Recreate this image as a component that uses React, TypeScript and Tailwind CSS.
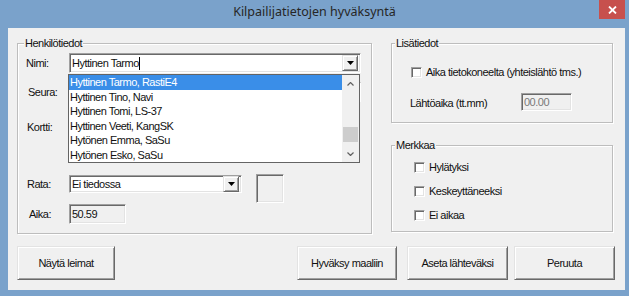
import React from "react";

const sunken =
  "border border-t-[#a0a0a0] border-l-[#a0a0a0] border-r-white border-b-white shadow-[inset_1px_1px_0_#696969,inset_-1px_-1px_0_#e3e3e3]";
const raised =
  "border border-t-[#e3e3e3] border-l-[#e3e3e3] border-r-[#696969] border-b-[#696969] shadow-[inset_1px_1px_0_#fff,inset_-1px_-1px_0_#a0a0a0] bg-[#f0f0f0]";
const etched =
  "border border-[#bdbdbd] shadow-[inset_1px_1px_0_#fff,1px_1px_0_#fff]";

function DropBtn() {
  return (
    <div className={`${raised} ml-auto mr-[2px] w-[16px] h-[16px] flex items-center justify-center`}>
      <svg width="7" height="4" viewBox="0 0 7 4">
        <polygon points="0,0 7,0 3.5,4" fill="#000" />
      </svg>
    </div>
  );
}

function Check({ label }: { label: string }) {
  return (
    <div className="flex items-center h-[11px]">
      <div className={`${sunken} w-[11px] h-[11px] bg-white`} />
      <span className="ml-[4px] leading-none">{label}</span>
    </div>
  );
}

function Legend({ text, left }: { text: string; left: string }) {
  return (
    <span className={`absolute -top-[7px] ${left} px-[1px] bg-[#f0f0f0] leading-[13px]`}>{text}</span>
  );
}

const items = [
  { t: "Hyttinen Tarmo, RastiE4", h: "h-[15px]", sel: true },
  { t: "Hyttinen Tino, Navi", h: "h-[14px]", sel: false },
  { t: "Hyttinen Tomi, LS-37", h: "h-[15px]", sel: false },
  { t: "Hyttinen Veeti, KangSK", h: "h-[14px]", sel: false },
  { t: "Hytönen Emma, SaSu", h: "h-[15px]", sel: false },
  { t: "Hytönen Esko, SaSu", h: "h-[14px]", sel: false },
];

export default function App() {
  return (
    <div className="w-[629px] h-[296px] bg-[#7aa2cb] flex flex-col font-['Liberation_Sans',Arial,sans-serif] text-[11px] tracking-[-0.5px] text-[#111] select-none">
      <div className="h-[28px] relative flex items-center justify-center">
        <span className="text-[12.5px] text-[#262626] tracking-normal font-['Noto_Sans',sans-serif] -mt-[3px]">
          Kilpailijatietojen hyväksyntä
        </span>
        <div className="absolute right-[4px] top-0 w-[26px] h-[19px] bg-[#c7504d] flex items-center justify-center">
          <svg width="9" height="8" viewBox="0 0 9 8">
            <path d="M1 0.5 L8 7.5 M8 0.5 L1 7.5" stroke="#fff" strokeWidth="1.8" />
          </svg>
        </div>
      </div>

      <div className="ml-[8px] mr-[4px] h-[262px] bg-[#f0f0f0] pl-[9px] pt-[15px] flex flex-col">
        <div className="flex items-start">
          {/* Henkilötiedot */}
          <div className={`${etched} relative w-[355px] h-[191px] flex flex-col pl-[8px]`}>
            <Legend text="Henkilötiedot" left="left-[6px]" />

            <div className="mt-[9px] h-[20px] flex items-center">
              <span className="w-[43px]">Nimi:</span>
              <div className={`${sunken} w-[292px] h-[20px] bg-white flex items-center`}>
                <span className="pl-[2px]">Hyttinen Tarmo</span>
                <span className="w-px h-[13px] bg-black" />
                <DropBtn />
              </div>
            </div>

            <div className="mt-[9px] h-[20px] flex items-center">
              <span className="w-[43px] pl-[2px]">Seura:</span>
              <div className={`${sunken} w-[292px] h-[20px] bg-white`} />
            </div>

            <div className="mt-[15px] h-[20px] flex items-center">
              <span className="w-[43px] pl-[1px]">Kortti:</span>
              <div className={`${sunken} w-[120px] h-[20px] bg-white`} />
            </div>

            <div className="mt-[38px] h-[18px] flex items-start">
              <span className="w-[43px] pl-[1px] leading-[18px]">Rata:</span>
              <div className={`${sunken} w-[173px] h-[18px] bg-white flex items-center`}>
                <span className="pl-[2px]">Ei tiedossa</span>
                <DropBtn />
              </div>
              <div className={`${sunken} ml-[14px] -mt-[1px] w-[28px] h-[29px] shrink-0`} />
            </div>

            <div className="mt-[11px] h-[20px] flex items-center">
              <span className="w-[43px] pl-[3px]">Aika:</span>
              <div className={`${sunken} w-[57px] h-[20px] flex items-center`}>
                <span className="pl-[2px]">50.59</span>
              </div>
            </div>

            {/* open dropdown list */}
            <div className="absolute left-[50px] top-[30px] w-[292px] h-[89px] border border-[#646464] bg-white flex">
              <div className="flex-1 flex flex-col">
                {items.map((it) => (
                  <div
                    key={it.t}
                    className={`${it.h} flex items-center pl-[1px] ${it.sel ? "bg-[#3a8ee8] text-white" : ""}`}
                  >
                    {it.t}
                  </div>
                ))}
              </div>
              <div className="w-[17px] bg-[#f0f0f0] flex flex-col">
                <div className="h-[17px] flex items-center justify-center">
                  <svg width="7" height="4" viewBox="0 0 7 4">
                    <path d="M0.5 3.5 L3.5 0.5 L6.5 3.5" stroke="#606060" strokeWidth="1.2" fill="none" />
                  </svg>
                </div>
                <div className="flex-1 flex flex-col">
                  <div className="h-[35px]" />
                  <div className="h-[15px] mx-[1px] bg-[#cdcdcd]" />
                </div>
                <div className="h-[17px] flex items-center justify-center">
                  <svg width="7" height="4" viewBox="0 0 7 4">
                    <path d="M0.5 0.5 L3.5 3.5 L6.5 0.5" stroke="#606060" strokeWidth="1.2" fill="none" />
                  </svg>
                </div>
              </div>
            </div>
          </div>

          {/* Right column */}
          <div className="ml-[19px] w-[222px] flex flex-col">
            <div className={`${etched} relative h-[80px] flex flex-col pl-[19px] pt-[23px]`}>
              <Legend text="Lisätiedot" left="left-[3px]" />
              <Check label="Aika tietokoneelta (yhteislähtö tms.)" />
              <div className="mt-[14px] -ml-[1px] flex items-center">
                <span className="w-[111px] mt-[3px]">Lähtöaika (tt.mm)</span>
                <div className={`${sunken} w-[51px] h-[18px] flex items-center`}>
                  <span className="pl-[2px] text-[#7a7a7a]">00.00</span>
                </div>
              </div>
            </div>

            <div className={`${etched} relative mt-[22px] h-[87px] flex flex-col pl-[22px] pt-[16px] gap-[13px]`}>
              <Legend text="Merkkaa" left="left-[3px]" />
              <Check label="Hylätyksi" />
              <Check label="Keskeyttäneeksi" />
              <Check label="Ei aikaa" />
            </div>
          </div>
        </div>

        <div className="mt-[12px] pr-[10px] flex items-start">
          <div className={`${raised} w-[98px] h-[34px] flex items-center justify-center`}>Näytä leimat</div>
          <div className={`${raised} ml-auto w-[100px] h-[34px] flex items-center justify-center`}>Hyväksy maaliin</div>
          <div className={`${raised} ml-[10px] w-[101px] h-[34px] flex items-center justify-center`}>Aseta lähteväksi</div>
          <div className={`${raised} ml-[6px] w-[101px] h-[34px] flex items-center justify-center`}>Peruuta</div>
        </div>
      </div>
    </div>
  );
}
